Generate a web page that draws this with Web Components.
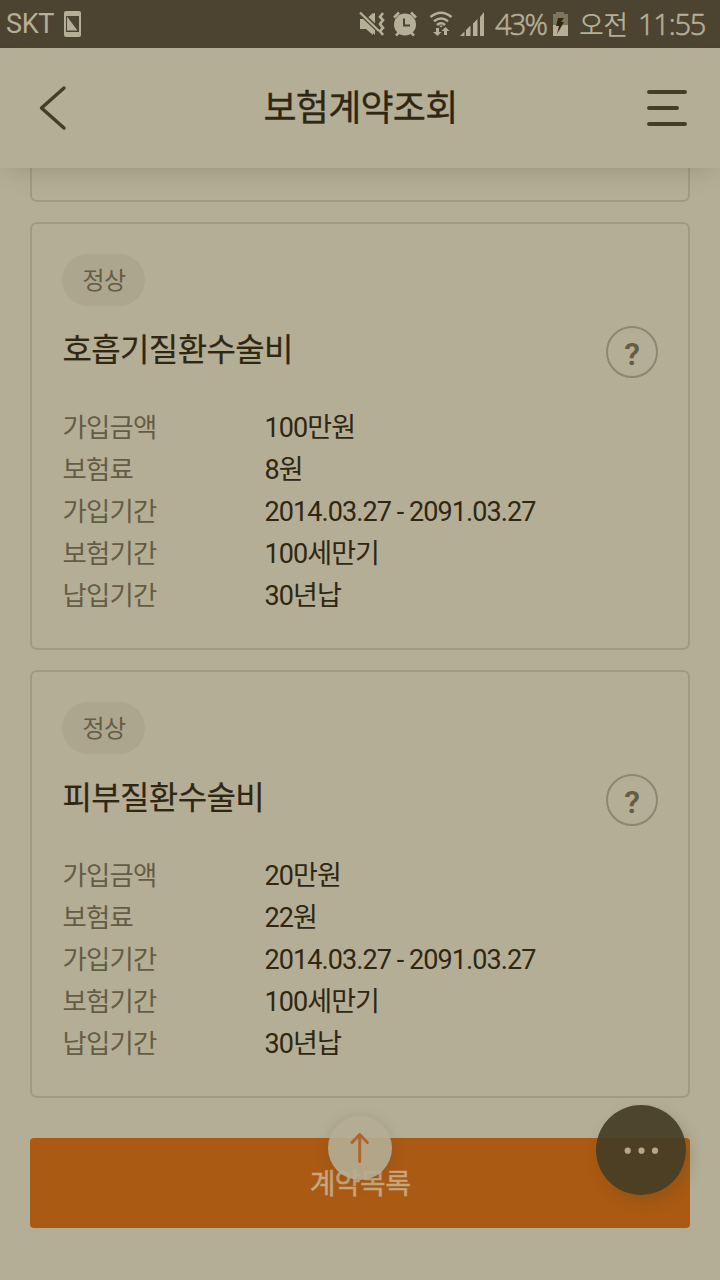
<!DOCTYPE html>
<html lang="ko">
<head>
<meta charset="utf-8">
<title>보험계약조회</title>
<style>
    body {
        margin: 0;
        width: 720px;
        height: 1280px;
        overflow: hidden;
        background: #b5ae97;
        color: #2f2712;
        font-family: Roboto, "Noto Sans CJK KR", sans-serif;
    }
</style>
</head>
<body>
<contract-app></contract-app>

<script>
class StatusBar extends HTMLElement {
    constructor() {
        super();
        this.attachShadow({mode: 'open'});
        this.shadowRoot.innerHTML = `
            <style>
                :host {
                    display: flex;
                    align-items: center;
                    justify-content: space-between;
                    height: 48px;
                    background: #4c4430;
                    color: #b6af98;
                    box-sizing: border-box;
                    padding: 0 16px 0 6px;
                }
                div { display: flex; align-items: center; height: 48px; }
                .carrier { font-size: 27px; letter-spacing: -0.3px; margin-right: 10px; }
                .num { font: 300 29px/48px "Open Sans", sans-serif; -webkit-text-stroke: 0.6px #b6af98; }
                .battery { width: 53px; letter-spacing: -1.8px; }
                .clock { width: 66px; letter-spacing: -1.2px; }
                .ampm { font: 350 27px/48px "Noto Sans CJK KR", sans-serif; width: 59px; letter-spacing: -0.6px; white-space: nowrap; }
                svg { display: block; flex: none; }
            </style>
            <div>
                <span class="carrier">SKT</span>
                <svg width="17" height="26" viewBox="0 0 17 26">
                    <rect width="17" height="26" rx="2" fill="#b6af98"/>
                    <path d="M2 5h13v16H2z" fill="#4c4430"/>
                    <path d="M3 5.500L13.500 19.500H3z" fill="#b6af98"/>
                </svg>
            </div>
            <div>
                <svg width="136" height="48" viewBox="0 0 136 48" fill="#b6af98">
                    <path d="M1 19h6l7-6v22l-7-6H1zM11 17l4-4h1v22l-5-5z"/>
                    <path d="M1 12.500L21 31.500" stroke="#4c4430" stroke-width="5"/>
                    <path d="M1 12.500L20 31" stroke="#b6af98" stroke-width="2.300"/>
                    <path d="M24 13l-3 4 3 3-3 4 3 4-3 3 3 4" fill="none" stroke="#b6af98" stroke-width="2.600"/>
                    <circle cx="46" cy="24.500" r="11"/>
                    <path d="M35 17.500l5-5M52 12.500l5 5M37 35.500l3.500-3.500M55 35.500l-3.500-3.500" stroke="#b6af98" stroke-width="2.500"/>
                    <path d="M45 18.500v7h6" fill="none" stroke="#4c4430" stroke-width="2"/>
                    <path d="M71.500 17q10.500-8.500 21 0M75 21.300q7-5.500 14 0M78 25q4-3.500 8 0" fill="none" stroke="#b6af98" stroke-width="2.500"/>
                    <path d="M80 25.500h4l-2 2zM77 28h3v4h2.500L78.500 36L74 32h3zM85 35h3v-4h2.500L86.500 27L82.500 31h2.500z"/>
                    <path d="M101 36l4.500-4.500v4.500zM107 36v-6l4.500-4.500v10.500zM114 36V23.500l4.500-4.500v17zM121 36V17l4-5v24z"/>
                </svg>
                <span class="num battery">43%</span>
                <svg width="31" height="48" viewBox="0 0 31 48">
                    <path d="M5 14h3v-2h8v2h4v11H5z" fill="#7c755f"/>
                    <path d="M5 25h15v11H5z" fill="#b6af98"/>
                    <path d="M10 18h6l-3 4h3l-7 12 2-8H8z" fill="#30280f"/>
                </svg>
                <span class="ampm">오전</span>
                <span class="num clock">11:55</span>
            </div>
        `;
    }
}
customElements.define('status-bar', StatusBar);

class TitleBar extends HTMLElement {
    constructor() {
        super();
        this.attachShadow({mode: 'open'});
        this.shadowRoot.innerHTML = `
            <style>
                :host {
                    display: flex;
                    align-items: center;
                    justify-content: space-between;
                    height: 120px;
                    box-sizing: border-box;
                    padding: 0 31px 0 38px;
                    background: #b5ae97;
                    position: relative;
                    z-index: 1;
                    box-shadow: 0 10px 24px -10px rgba(76, 82, 50, 0.32);
                }
                h1 {
                    margin: 0;
                    padding: 2px 6px 0 0;
                    font-size: 36px;
                    font-weight: 400;
                    line-height: 118px;
                    letter-spacing: -0.8px;
                    -webkit-text-stroke: 0.3px;
                }
                svg { fill: none; stroke: #463d29; stroke-linecap: round; }
            </style>
            <svg width="44" height="48" viewBox="0 0 44 48">
                <path d="M26 4L3.500 24L26 44" stroke-width="3.400" stroke-linejoin="round"/>
            </svg>
            <h1><slot></slot></h1>
            <svg width="44" height="48" viewBox="0 0 44 48">
                <path d="M4 8h36M4 40h36" stroke-width="3.900"/>
                <path d="M4 24h28" stroke-width="3.900"/>
            </svg>
        `;
    }
}
customElements.define('title-bar', TitleBar);

// one row of a contract card: term on the left, slotted value on the right
class ContractRow extends HTMLElement {
    constructor() {
        super();
        this.attachShadow({mode: 'open'});
        this.shadowRoot.innerHTML = `
            <style>
                :host {
                    display: grid;
                    grid-template-columns: 202px 1fr;
                    height: 42px;
                    line-height: 44px;
                    font-size: 27px;
                    letter-spacing: -0.92px;
                    white-space: nowrap;
                }
                .term {
                    color: #655c46;
                    font-size: 26.4px;
                    letter-spacing: -0.75px;
                    padding-left: 0.5px;
                }
                .value { padding-left: 0.5px; }
            </style>
            <span class="term"></span>
            <span class="value"><slot></slot></span>
        `;
    }

    connectedCallback() {
        this.shadowRoot.querySelector('.term').textContent = this.getAttribute('term');
    }
}
customElements.define('contract-row', ContractRow);

class ContractCard extends HTMLElement {
    constructor() {
        super();
        this.attachShadow({mode: 'open'});
        this.shadowRoot.innerHTML = `
            <style>
                :host {
                    display: block;
                    box-sizing: border-box;
                    height: 428px;
                    border: 2px solid #a19a82;
                    border-radius: 7px;
                    padding: 30px;
                }
                .state {
                    box-sizing: border-box;
                    width: 83px;
                    height: 52px;
                    border-radius: 26px;
                    background: #ada68f;
                    color: #655c46;
                    font-size: 24px;
                    line-height: 54px;
                    letter-spacing: -0.5px;
                    padding-left: 20.5px;
                }
                .head {
                    display: flex;
                    justify-content: space-between;
                    align-items: center;
                    height: 52px;
                    margin: 20px 0 28px;
                }
                h2 {
                    margin: 0;
                    font-size: 32px;
                    font-weight: 400;
                    line-height: 48px;
                    letter-spacing: -0.65px;
                    padding: 0 0 4px 0.5px;
                    -webkit-text-stroke: 0.2px;
                }
                .help {
                    box-sizing: border-box;
                    width: 52px;
                    height: 52px;
                    border: 2px solid #8e866e;
                    border-radius: 50%;
                    color: #655c46;
                    font-size: 32px;
                    font-weight: 600;
                    line-height: 52px;
                    text-align: center;
                }
            </style>
            <div class="state"></div>
            <div class="head">
                <h2></h2>
                <span class="help">?</span>
            </div>
            <slot></slot>
        `;
    }

    connectedCallback() {
        this.shadowRoot.querySelector('.state').textContent = this.getAttribute('state');
        this.shadowRoot.querySelector('h2').textContent = this.getAttribute('name');
    }
}
customElements.define('contract-card', ContractCard);

class ListButton extends HTMLElement {
    constructor() {
        super();
        this.attachShadow({mode: 'open'});
        this.shadowRoot.innerHTML = `
            <style>
                :host {
                    display: block;
                    box-sizing: border-box;
                    height: 90px;
                    padding-top: 3px;
                    line-height: 88px;
                    text-align: center;
                    border-radius: 4px;
                    background: #aa5a13;
                    color: #c4a77f;
                    font-size: 28px;
                    letter-spacing: -0.6px;
                    -webkit-text-stroke: 0.5px;
                }
            </style>
            <slot></slot>
        `;
    }
}
customElements.define('list-button', ListButton);

// round buttons floating over the page
class FloatButtons extends HTMLElement {
    constructor() {
        super();
        this.attachShadow({mode: 'open'});
        this.shadowRoot.innerHTML = `
            <style>
                span {
                    position: absolute;
                    z-index: 2;
                    border-radius: 50%;
                }
                .top {
                    left: 328px;
                    top: 1116px;
                    width: 64px;
                    height: 64px;
                    background: rgba(180, 173, 146, 0.92);
                    box-shadow: 0 2px 14px rgba(76, 68, 48, 0.2);
                }
                .more {
                    left: 596px;
                    top: 1105px;
                    width: 90px;
                    height: 90px;
                    background: rgba(70, 61, 37, 0.93);
                    box-shadow: 4px 6px 14px rgba(76, 68, 30, 0.26);
                }
                svg { display: block; }
            </style>
            <span class="top">
                <svg width="64" height="64" viewBox="0 0 64 64" fill="none" stroke="#b0662a" stroke-width="3" stroke-linecap="round" stroke-linejoin="round">
                    <path d="M31.700 45.500V18.500M24 26.500l7.700-8 7.700 8"/>
                </svg>
            </span>
            <span class="more">
                <svg width="90" height="90" viewBox="0 0 90 90" fill="#b5a88a">
                    <circle cx="31.700" cy="45.700" r="3.100"/>
                    <circle cx="45.500" cy="45.700" r="3.100"/>
                    <circle cx="59" cy="45.700" r="3.100"/>
                </svg>
            </span>
        `;
    }
}
customElements.define('float-buttons', FloatButtons);

class ContractApp extends HTMLElement {
    constructor() {
        super();
        this.attachShadow({mode: 'open'});
        this.shadowRoot.innerHTML = `
            <style>
                :host { display: block; }
                main {
                    display: flex;
                    flex-direction: column;
                    gap: 20px;
                    padding: 0 30px;
                }
                /* end of the card scrolled under the title bar */
                .scrolled {
                    height: 32px;
                    border: 2px solid #a19a82;
                    border-top: 0;
                    border-radius: 0 0 7px 7px;
                }
                list-button { margin-top: 20px; }
            </style>
            <status-bar></status-bar>
            <title-bar>보험계약조회</title-bar>
            <main>
                <div class="scrolled"></div>
                <contract-card state="정상" name="호흡기질환수술비">
                    <contract-row term="가입금액">100만원</contract-row>
                    <contract-row term="보험료">8원</contract-row>
                    <contract-row term="가입기간">2014.03.27 - 2091.03.27</contract-row>
                    <contract-row term="보험기간">100세만기</contract-row>
                    <contract-row term="납입기간">30년납</contract-row>
                </contract-card>
                <contract-card state="정상" name="피부질환수술비">
                    <contract-row term="가입금액">20만원</contract-row>
                    <contract-row term="보험료">22원</contract-row>
                    <contract-row term="가입기간">2014.03.27 - 2091.03.27</contract-row>
                    <contract-row term="보험기간">100세만기</contract-row>
                    <contract-row term="납입기간">30년납</contract-row>
                </contract-card>
                <list-button>계약목록</list-button>
            </main>
            <float-buttons></float-buttons>
        `;
    }
}
customElements.define('contract-app', ContractApp);
</script>
</body>
</html>
